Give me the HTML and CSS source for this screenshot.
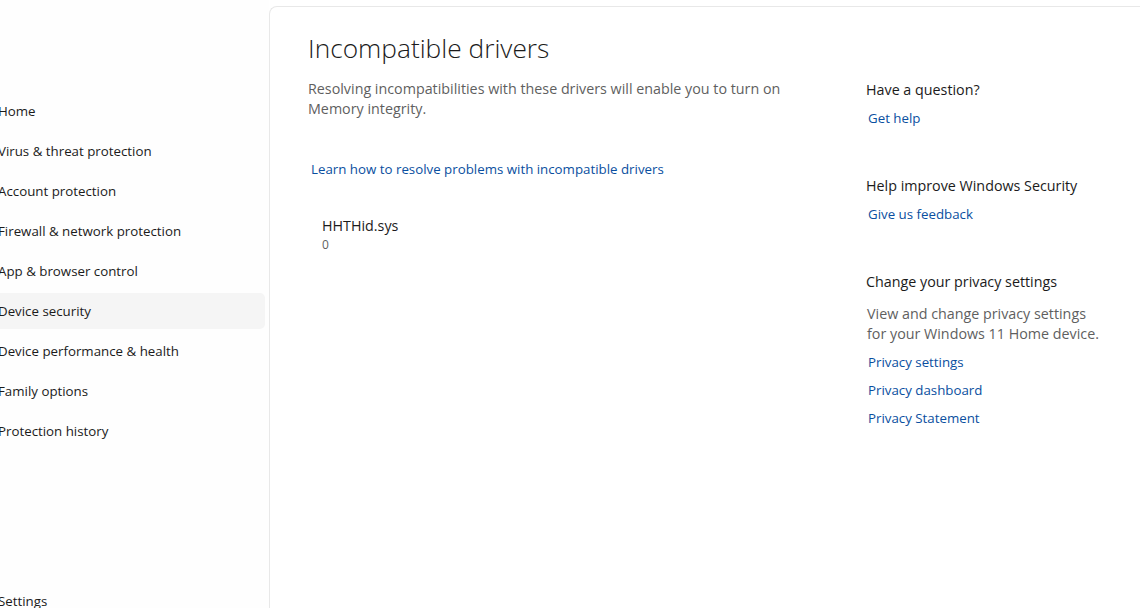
FILE: index.html
```html
<!DOCTYPE html>
<html>
<head>
<meta charset="utf-8">
<link rel="stylesheet" href="styles.css">
</head>
<body>
<div class="app">
  <aside class="sidebar">
    <nav class="nav">
      <div class="nav-item">Home</div>
      <div class="nav-item">Virus &amp; threat protection</div>
      <div class="nav-item">Account protection</div>
      <div class="nav-item">Firewall &amp; network protection</div>
      <div class="nav-item">App &amp; browser control</div>
      <div class="nav-item selected">Device security</div>
      <div class="nav-item">Device performance &amp; health</div>
      <div class="nav-item">Family options</div>
      <div class="nav-item">Protection history</div>
    </nav>
    <div class="nav-item settings">Settings</div>
  </aside>
  <main class="panel">
    <div class="main-col">
      <h1 class="title">Incompatible drivers</h1>
      <p class="desc">Resolving incompatibilities with these drivers will enable you to turn on Memory integrity.</p>
      <a class="link learn">Learn how to resolve problems with incompatible drivers</a>
      <div class="driver">
        <div class="driver-name">HHTHid.sys</div>
        <div class="driver-sub">0</div>
      </div>
    </div>
    <div class="side-col">
      <section class="side-sec">
        <h2 class="side-h">Have a question?</h2>
        <a class="link side-link">Get help</a>
      </section>
      <section class="side-sec">
        <h2 class="side-h">Help improve Windows Security</h2>
        <a class="link side-link">Give us feedback</a>
      </section>
      <section class="side-sec">
        <h2 class="side-h">Change your privacy settings</h2>
        <p class="side-p">View and change privacy settings for your Windows 11 Home device.</p>
        <a class="link side-link">Privacy settings</a>
        <a class="link side-link">Privacy dashboard</a>
        <a class="link side-link">Privacy Statement</a>
      </section>
    </div>
  </main>
</div>
</body>
</html>
```
FILE: styles.css
```css
html, body {
  margin: 0;
  padding: 0;
  background: #ffffff;
}
body {
  font-family: "Open Sans", "Noto Sans", sans-serif;
  color: #1b1b1b;
  width: 1140px;
  height: 608px;
  overflow: hidden;
}
.app {
  display: flex;
  height: 608px;
}
.sidebar {
  width: 269px;
  flex: none;
  display: flex;
  flex-direction: column;
  background: #fefefe;
}
.nav {
  padding-top: 91px;
  display: flex;
  flex-direction: column;
  flex: 1;
}
.nav-item {
  height: 40px;
  line-height: 40px;
  margin: 0 4px 0 -2px;
  font-size: 13.3px;
  color: #1b1b1b;
  border-radius: 0 5px 5px 0;
  white-space: nowrap;
}
.nav-item.selected {
  background: #f5f5f5;
  height: 36px;
  line-height: 36px;
  margin-top: 2px;
  margin-bottom: 2px;
}
.settings {
  height: 28px;
  line-height: 28px;
  margin-bottom: -7px;
}
.panel {
  flex: 1;
  margin-top: 6px;
  border-top: 1px solid #e8e8e8;
  border-left: 1px solid #e8e8e8;
  border-top-left-radius: 8px;
  background: #ffffff;
  display: grid;
  grid-template-columns: 558px 1fr;
  padding-left: 38px;
  align-items: start;
}
.title {
  margin: 0;
  padding-top: 23px;
  font-weight: 300;
  font-size: 26.3px;
  line-height: 36px;
  color: #1b1b1b;
}
.desc {
  margin: 13px 0 0;
  width: 480px;
  font-size: 14.3px;
  line-height: 20px;
  color: #5f5f5f;
}
.link {
  display: block;
  color: #0a4fa0;
  font-size: 13.3px;
  line-height: 20px;
  text-decoration: none;
  cursor: pointer;
}
.learn {
  margin: 40px 0 0 3px;
}
.driver {
  margin: 37px 0 0 14px;
}
.driver-name {
  font-size: 14.3px;
  line-height: 20px;
  color: #1b1b1b;
}
.driver-sub {
  font-size: 12px;
  line-height: 18px;
  color: #5f5f5f;
}
.side-col {
  padding-top: 73px;
  display: flex;
  flex-direction: column;
  gap: 44px;
}
.side-sec {
  display: flex;
  flex-direction: column;
}
.side-h {
  margin: 0;
  font-weight: 400;
  font-size: 14.3px;
  line-height: 20px;
  color: #1b1b1b;
  padding-bottom: 8px;
}
.side-p {
  margin: 4px 0 0 1px;
  font-size: 14.3px;
  line-height: 20px;
  color: #5f5f5f;
  width: 240px;
  padding-bottom: 8px;
}
.side-link {
  margin-left: 2px;
  padding: 0;
  line-height: 28px;
  margin-top: -4px;
}
.side-link + .side-link {
  margin-top: 0;
}
```
